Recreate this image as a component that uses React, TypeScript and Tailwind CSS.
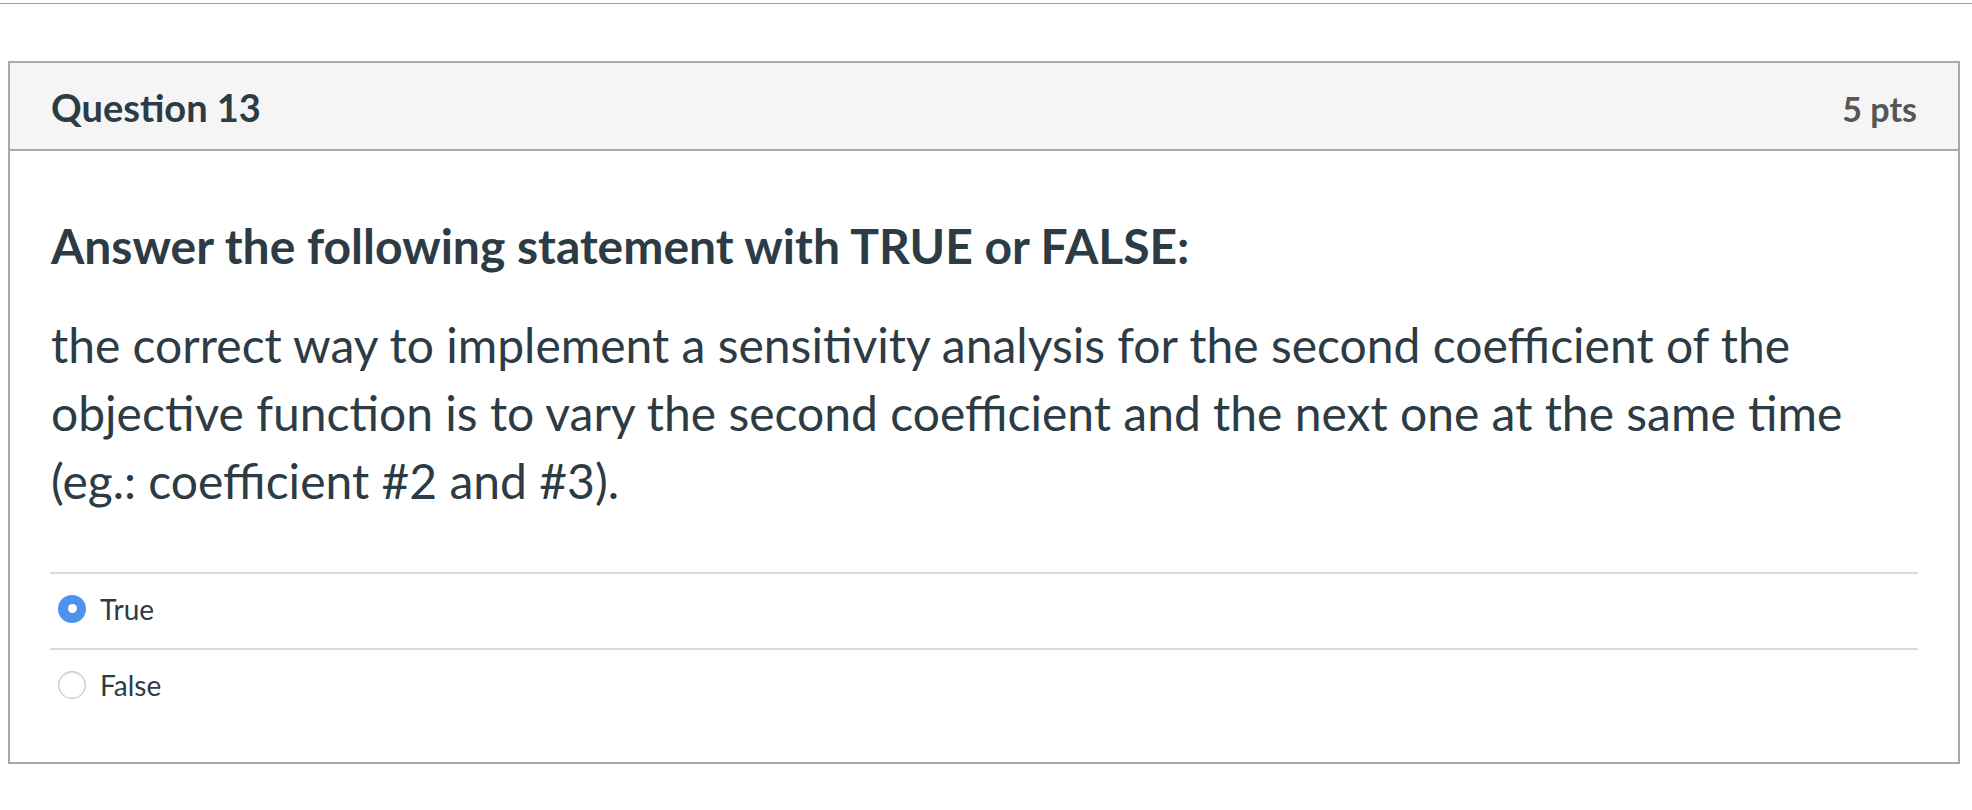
import React from "react";

type Option = { label: string; selected?: boolean };

const options: Option[] = [
  { label: "True", selected: true },
  { label: "False" },
];

function Radio({ selected }: { selected?: boolean }) {
  if (selected) {
    return (
      <span className="flex items-center justify-center w-[28px] h-[28px] rounded-full bg-[#4c93ee] shrink-0">
        <span className="w-[9px] h-[9px] rounded-full bg-white" />
      </span>
    );
  }
  return (
    <span className="w-[28px] h-[28px] rounded-full bg-white border border-[#bdbdbd] shadow-[inset_0_1px_2px_rgba(0,0,0,0.12)] shrink-0" />
  );
}

export default function App() {
  return (
    <div className="min-h-screen bg-white font-[Lato,sans-serif] text-[#2d3b45]">
      {/* thin rule at the very top */}
      <div className="pt-[3px]">
        <div className="border-t border-[#a3a3a3]" />
      </div>

      <div className="mt-[57px] ml-2 mr-3 border-2 border-[#a8a8a8]">
        {/*Header*/}
        <div className="flex items-baseline justify-between h-[88px] pt-[25px] px-[41px] bg-[#f5f5f5] border-b-2 border-[#a8a8a8]">
          <div className="text-[38px] font-bold leading-none">Question 13</div>
          <div className="text-[34px] font-bold leading-none text-[#565656]">5 pts</div>
        </div>

        {/*Question text*/}
        <div className="px-[40px] pt-[66px] pb-[38px]">
          <div className="px-[1px]">
            <p className="text-[48px] font-bold leading-[1.2]">
              Answer the following statement with TRUE or FALSE:
            </p>
            <p className="mt-[36px] text-[48px] leading-[68px]">
              the correct way to implement a sensitivity analysis for the second coefficient of the
              objective function is to vary the second coefficient and the next one at the same time
              (eg.: coefficient #2 and #3).
            </p>
          </div>

          {/*Answers*/}
          <div className="mt-[57px]">
            {options.map((o) => (
              <div
                key={o.label}
                className="flex items-center gap-[14px] h-[76px] pb-[4px] pl-[8px] border-t-2 border-[#dadada]"
              >
                <Radio selected={o.selected} />
                <span className="text-[28px] leading-none">{o.label}</span>
              </div>
            ))}
          </div>
        </div>
      </div>
    </div>
  );
}
